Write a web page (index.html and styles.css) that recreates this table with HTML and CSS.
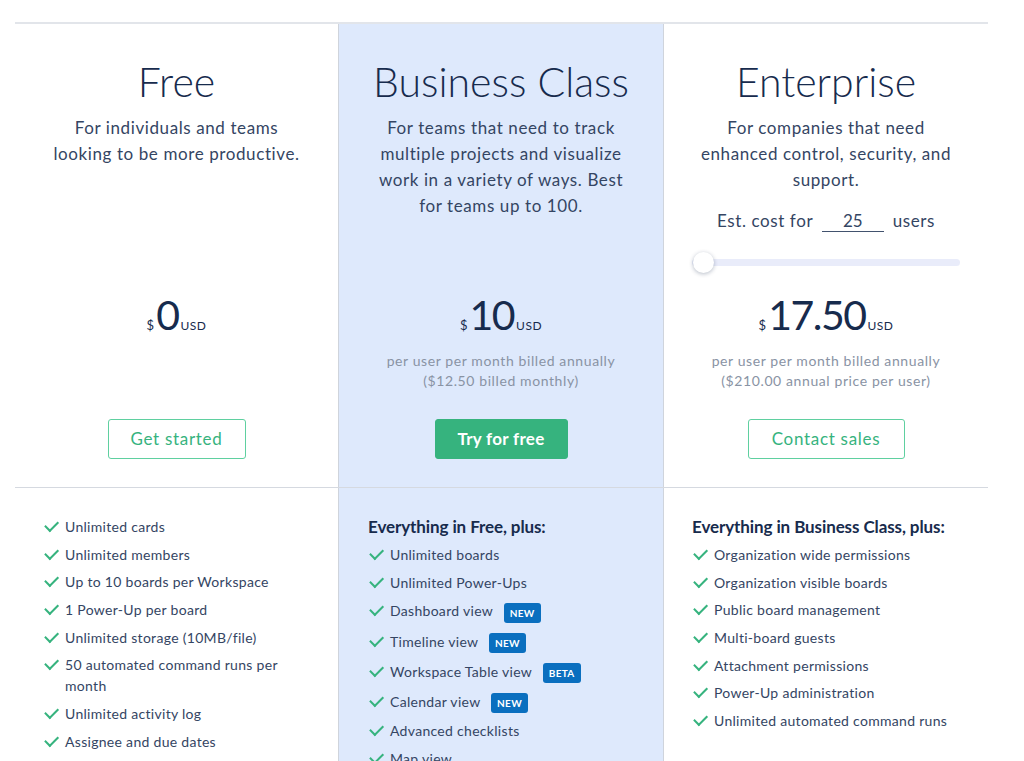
FILE: index.html
```html
<!DOCTYPE html>
<html lang="en">

<head>
    <meta charset="UTF-8">
    <meta name="viewport" content="width=device-width, initial-scale=1.0">
    <title>Pricing</title>
    <link rel="stylesheet" href="styles.css">
</head>

<body>
    <div class="pricing">

        <!-- Plan headers -->
        <div class="plans">
            <div class="plan">
                <div class="plan-info">
                    <h2>Free</h2>
                    <p class="desc desc-free">For individuals and teams looking to be more productive.</p>
                </div>
                <div class="plan-price">
                    <div class="price"><span class="cur">$</span><span class="amount">0</span><span class="unit">USD</span></div>
                    <p class="billing"></p>
                    <a class="btn btn-outline" href="#">Get started</a>
                </div>
            </div>

            <div class="plan plan-featured">
                <div class="plan-info">
                    <h2>Business Class</h2>
                    <p class="desc">For teams that need to track multiple projects and visualize work in a variety of ways. Best for teams up to 100.</p>
                </div>
                <div class="plan-price">
                    <div class="price"><span class="cur">$</span><span class="amount">10</span><span class="unit">USD</span></div>
                    <p class="billing">per user per month billed annually<br>($12.50 billed monthly)</p>
                    <a class="btn btn-solid" href="#">Try for free</a>
                </div>
            </div>

            <div class="plan">
                <div class="plan-info">
                    <h2>Enterprise</h2>
                    <p class="desc">For companies that need enhanced control, security, and support.</p>
                    <div class="estimate">
                        Est. cost for <input class="users-input" type="text" value="25"> users
                    </div>
                    <div class="slider">
                        <div class="slider-track"></div>
                        <div class="slider-thumb"></div>
                    </div>
                </div>
                <div class="plan-price">
                    <div class="price"><span class="cur">$</span><span class="amount">17.50</span><span class="unit">USD</span></div>
                    <p class="billing">per user per month billed annually<br>($210.00 annual price per user)</p>
                    <a class="btn btn-outline btn-wide" href="#">Contact sales</a>
                </div>
            </div>
        </div>

        <!-- Feature lists -->
        <div class="features">
            <div class="feature-col">
                <ul>
                    <li><span class="check"></span><span>Unlimited cards</span></li>
                    <li><span class="check"></span><span>Unlimited members</span></li>
                    <li><span class="check"></span><span>Up to 10 boards per Workspace</span></li>
                    <li><span class="check"></span><span>1 Power-Up per board</span></li>
                    <li><span class="check"></span><span>Unlimited storage (10MB/file)</span></li>
                    <li><span class="check"></span><span>50 automated command runs per month</span></li>
                    <li><span class="check"></span><span>Unlimited activity log</span></li>
                    <li><span class="check"></span><span>Assignee and due dates</span></li>
                    <li><span class="check"></span><span>iOS and Android mobile apps</span></li>
                </ul>
            </div>

            <div class="feature-col plan-featured">
                <h4>Everything in Free, plus:</h4>
                <ul>
                    <li><span class="check"></span><span>Unlimited boards</span></li>
                    <li><span class="check"></span><span>Unlimited Power-Ups</span></li>
                    <li class="with-badge"><span class="check"></span><span>Dashboard view <em class="badge">NEW</em></span></li>
                    <li class="with-badge"><span class="check"></span><span>Timeline view <em class="badge">NEW</em></span></li>
                    <li class="with-badge"><span class="check"></span><span>Workspace Table view <em class="badge">BETA</em></span></li>
                    <li class="with-badge"><span class="check"></span><span>Calendar view <em class="badge">NEW</em></span></li>
                    <li><span class="check"></span><span>Advanced checklists</span></li>
                    <li><span class="check"></span><span>Map view</span></li>
                    <li><span class="check"></span><span>Custom fields</span></li>
                </ul>
            </div>

            <div class="feature-col">
                <h4>Everything in Business Class, plus:</h4>
                <ul>
                    <li><span class="check"></span><span>Organization wide permissions</span></li>
                    <li><span class="check"></span><span>Organization visible boards</span></li>
                    <li><span class="check"></span><span>Public board management</span></li>
                    <li><span class="check"></span><span>Multi-board guests</span></li>
                    <li><span class="check"></span><span>Attachment permissions</span></li>
                    <li><span class="check"></span><span>Power-Up administration</span></li>
                    <li><span class="check"></span><span>Unlimited automated command runs</span></li>
                </ul>
            </div>
        </div>

    </div>
</body>

</html>
```

FILE: styles.css
```css
body {
    margin: 0;
    font-family: Lato, "Noto Sans", sans-serif;
    color: #344563;
    background-color: #fff;
}

.pricing {
    margin: 22px 36px 0 15px;
    border-top: 2px solid #e2e5ea;
}

/* Plan headers */
.plans,
.features {
    display: grid;
    grid-template-columns: 323px 326px 1fr;
}

.plans {
    border-bottom: 1px solid #d5d9e0;
}

.plan {
    display: flex;
    flex-direction: column;
    justify-content: space-between;
    height: 463px;
    padding: 0 24px;
    text-align: center;
}

.plan-featured {
    background-color: #dee9fc;
    border-left: 1px solid #cfd4dc;
    border-right: 1px solid #cfd4dc;
}

.plan h2 {
    margin: 34px 0 9px;
    font-size: 41px;
    font-weight: 300;
    line-height: 48px;
    color: #172b4d;
}

.desc {
    margin: 0 auto;
    max-width: 266px;
    font-size: 17px;
    line-height: 26px;
    letter-spacing: 0.6px;
}

.desc-free {
    max-width: 258px;
}

.estimate {
    margin-top: 15px;
    font-size: 17px;
    line-height: 26px;
    letter-spacing: 0.6px;
}

.users-input {
    width: 62px;
    margin: 0 4px;
    padding: 0;
    border: none;
    border-bottom: 1px solid #42526e;
    background: transparent;
    font-family: inherit;
    font-size: 17px;
    color: #344563;
    text-align: center;
}

.slider {
    position: relative;
    height: 20px;
    margin: 18px 4px 0;
}

.slider-track {
    position: absolute;
    left: 0;
    right: 0;
    top: 7px;
    height: 7px;
    border-radius: 4px;
    background-color: #e9ecfa;
}

.slider-thumb {
    position: absolute;
    left: 1px;
    top: 0;
    width: 21px;
    height: 21px;
    border-radius: 50%;
    background-color: #fff;
    box-shadow: 0 1px 4px rgba(9, 30, 66, 0.3);
}

.plan-price {
    padding-bottom: 28px;
}

.price {
    display: flex;
    justify-content: center;
    align-items: baseline;
    height: 50px;
    color: #172b4d;
}

.price .cur {
    font-size: 13px;
    margin-right: 2px;
}

.price .amount {
    font-size: 41px;
    line-height: 50px;
    font-weight: 400;
    letter-spacing: -1.5px;
}

.price .unit {
    font-size: 12px;
    margin-left: 2px;
    letter-spacing: 0.5px;
}

.billing {
    height: 40px;
    margin: 11px 0 28px;
    font-size: 14px;
    line-height: 20px;
    color: #8993a4;
    letter-spacing: 0.6px;
}

.btn {
    display: inline-block;
    box-sizing: border-box;
    height: 40px;
    line-height: 38px;
    padding: 0 20px;
    border-radius: 3px;
    font-size: 17px;
    letter-spacing: 0.7px;
    text-decoration: none;
}

.btn-outline {
    border: 1px solid #5fd0a0;
    color: #36b37e;
    min-width: 138px;
}

.btn-wide {
    min-width: 157px;
}

.btn-solid {
    border: 1px solid #36b37e;
    background-color: #36b37e;
    color: #fff;
    min-width: 133px;
    font-weight: 700;
    letter-spacing: 0.3px;
}

/* Feature lists */
.feature-col {
    padding: 28px 28px 0;
}

.feature-col.plan-featured {
    padding-left: 29px;
}

.feature-col h4 {
    margin: 0 0 7px;
    font-size: 17px;
    line-height: 21px;
    font-weight: 700;
    color: #172b4d;
    letter-spacing: -0.1px;
}

.feature-col ul {
    list-style: none;
    margin: 0;
    padding: 0;
}

.feature-col li {
    display: flex;
    align-items: flex-start;
    margin-bottom: 6.7px;
    font-size: 14px;
    line-height: 21px;
    letter-spacing: 0.3px;
}

.feature-col li.with-badge {
    line-height: 23px;
}

.check {
    flex: none;
    width: 11px;
    height: 6px;
    margin: 4px 9px 0 0;
    border-left: 2.5px solid #36b37e;
    border-bottom: 2.5px solid #36b37e;
    transform: rotate(-45deg) translate(1px, 2px);
}

.with-badge .check {
    margin-top: 5px;
}

.badge {
    display: inline-block;
    margin-left: 7px;
    padding: 0 6px;
    height: 20px;
    line-height: 20px;
    border-radius: 3px;
    background-color: #0a6fbf;
    color: #fff;
    font-size: 10px;
    font-weight: 700;
    font-style: normal;
    vertical-align: middle;
    letter-spacing: 0.3px;
}
```
